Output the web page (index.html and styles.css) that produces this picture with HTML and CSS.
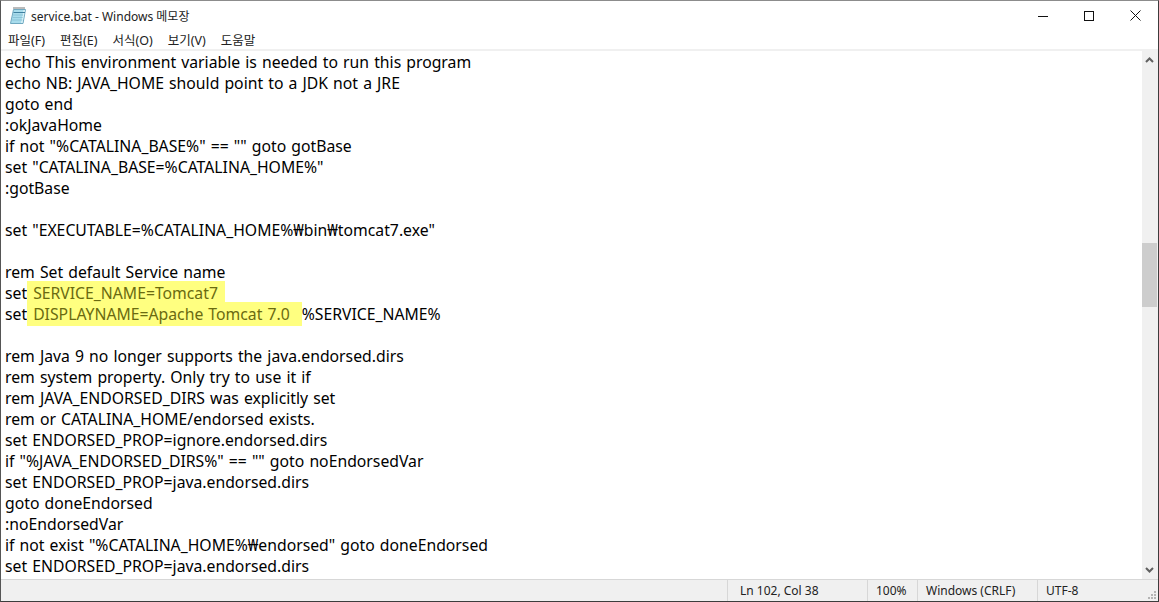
FILE: index.html
```
<!DOCTYPE html>
<html lang="ko">
<head>
<meta charset="utf-8">
<title>service.bat - Windows 메모장</title>
<link rel="stylesheet" href="styles.css">
</head>
<body>
<div class="window">
  <header class="titlebar">
    <svg class="appicon" width="16" height="18" viewBox="0 0 16 18">
      <path d="M3.5 2.5 L15.5 2.5 L13 16.5 L.5 16.5 Z" fill="#a8dcec" stroke="#6fa8c0"/>
      <path d="M13.5 3 L15 3 L12.5 16 L11 16 Z" fill="#d8f0f6"/>
      <path d="M3.5 5.5h11.5" stroke="#3f7f9f"/>
      <path d="M3.5 1h11" stroke="#777" stroke-width="2" stroke-dasharray="1 1"/>
      <path d="M3 8h10M2.6 10.5h10M2.2 13h10" stroke="#8cc4d8"/>
    </svg>
    <span class="title">service.bat - Windows 메모장</span>
    <div class="controls">
      <span class="ctl"><svg width="10" height="10" viewBox="0 0 10 10"><path d="M0 5.5h10" stroke="#111"/></svg></span>
      <span class="ctl"><svg width="10" height="10" viewBox="0 0 10 10"><rect x=".5" y=".5" width="9" height="9" fill="none" stroke="#111"/></svg></span>
      <span class="ctl"><svg width="11" height="11" viewBox="0 0 11 11"><path d="M.5 .5l10 10M10.5 .5l-10 10" stroke="#111"/></svg></span>
    </div>
  </header>
  <nav class="menu">
    <span>파일(F)</span><span>편집(E)</span><span>서식(O)</span><span>보기(V)</span><span>도움말</span>
  </nav>
  <main class="body">
    <div class="editor">
      <div>echo This environment variable is needed to run this program</div>
      <div>echo NB: JAVA_HOME should point to a JDK not a JRE</div>
      <div>goto end</div>
      <div>:okJavaHome</div>
      <div>if not "%CATALINA_BASE%" == "" goto gotBase</div>
      <div>set "CATALINA_BASE=%CATALINA_HOME%"</div>
      <div>:gotBase</div>
      <div>&nbsp;</div>
      <div>set "EXECUTABLE=%CATALINA_HOME%₩bin₩tomcat7.exe"</div>
      <div>&nbsp;</div>
      <div>rem Set default Service name</div>
      <div>set<mark class="hl hl-a">SERVICE_NAME=Tomcat7</mark></div>
      <div>set<mark class="hl hl-b">DISPLAYNAME=Apache Tomcat 7.0</mark>%SERVICE_NAME%</div>
      <div>&nbsp;</div>
      <div>rem Java 9 no longer supports the java.endorsed.dirs</div>
      <div>rem system property. Only try to use it if</div>
      <div>rem JAVA_ENDORSED_DIRS was explicitly set</div>
      <div>rem or CATALINA_HOME/endorsed exists.</div>
      <div>set ENDORSED_PROP=ignore.endorsed.dirs</div>
      <div>if "%JAVA_ENDORSED_DIRS%" == "" goto noEndorsedVar</div>
      <div>set ENDORSED_PROP=java.endorsed.dirs</div>
      <div>goto doneEndorsed</div>
      <div>:noEndorsedVar</div>
      <div>if not exist "%CATALINA_HOME%₩endorsed" goto doneEndorsed</div>
      <div>set ENDORSED_PROP=java.endorsed.dirs</div>
    </div>
    <div class="scrollbar">
      <svg width="9" height="6" viewBox="0 0 9 6"><path d="M1 5l3.5-3.5L8 5" fill="none" stroke="#606060" stroke-width="2"/></svg>
      <div class="track"><div class="thumb"></div></div>
      <svg width="9" height="6" viewBox="0 0 9 6"><path d="M1 1l3.5 3.5L8 1" fill="none" stroke="#606060" stroke-width="2"/></svg>
    </div>
  </main>
  <footer class="status">
    <span class="cell cell-pos">Ln 102, Col 38</span>
    <span class="cell cell-zoom">100%</span>
    <span class="cell cell-eol">Windows (CRLF)</span>
    <span class="cell cell-enc">UTF-8</span>
    <svg class="grip" width="10" height="10" viewBox="0 0 10 10" fill="#b4b4b4"><rect x="7" y="1" width="2" height="2"/><rect x="4" y="4" width="2" height="2"/><rect x="7" y="4" width="2" height="2"/><rect x="1" y="7" width="2" height="2"/><rect x="4" y="7" width="2" height="2"/><rect x="7" y="7" width="2" height="2"/></svg>
  </footer>
</div>
</body>
</html>
```
FILE: styles.css
```
html, body { margin: 0; padding: 0; background: #fff; }
body { width: 1159px; height: 602px; overflow: hidden; font-family: "Noto Sans", "Noto Sans CJK KR", sans-serif; color: #000; }
.window { box-sizing: border-box; width: 1159px; height: 602px; display: flex; flex-direction: column; border-top: 1px solid #8c8c8c; border-left: 1px solid #555; border-right: 1px solid #3c3c3c; border-bottom: 1px solid #3c3c3c; background: #fff; }
.titlebar { height: 29px; display: flex; align-items: center; padding-left: 9px; flex: none; }
.appicon { flex: none; }
.title { margin-left: 5px; font-size: 12px; color: #222; }
.controls { margin-left: auto; display: flex; }
.ctl { width: 46px; height: 29px; display: flex; align-items: center; justify-content: center; }
.menu { height: 19px; display: flex; gap: 15px; align-items: center; padding-left: 7px; font-size: 12.5px; flex: none; color: #222; }
.body { flex: 1; min-height: 0; display: flex; border-top: 2px solid #f0f0f0; }
.editor { flex: 1; min-width: 0; overflow: hidden; padding: 1px 0 0 4px; font-size: 15.75px; word-spacing: 1px; line-height: 21px; white-space: nowrap; }
.hl { background: #ffff80; color: #6a6a10; padding: 1px 12px 1px 6px; }
.hl-a { padding-right: 7px; }
.scrollbar { width: 16px; background: #f0f0f0; display: flex; flex-direction: column; align-items: center; flex: none; padding: 6px 1px 6px 0; box-sizing: border-box; }
.track { flex: 1; width: 100%; padding-top: 174px; box-sizing: border-box; margin: 6px 0; }
.thumb { height: 64px; width: 15px; background: #cdcdcd; }
.status { height: 22px; flex: none; display: flex; align-items: center; background: #f0f0f0; border-top: 1px solid #d7d7d7; box-sizing: border-box; font-size: 12px; color: #222; position: relative; }
.cell { height: 100%; display: flex; align-items: center; border-left: 1px solid #d7d7d7; box-sizing: border-box; padding-left: 12px; }
.cell-pos { margin-left: 726px; width: 140px; }
.cell-zoom { width: 50px; padding-left: 8px; }
.cell-eol { width: 120px; padding-left: 8px; }
.cell-enc { flex: 1; padding-left: 8px; }
.grip { position: absolute; right: 1px; bottom: 1px; }
```
